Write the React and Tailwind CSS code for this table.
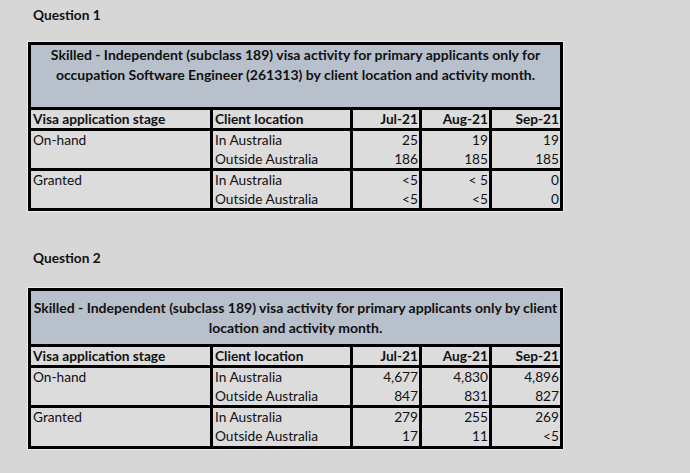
import React from "react";

const font = { fontFamily: "Lato, 'Open Sans', sans-serif" };

function Table({ titleLines, titleH, titleAlign, rows }) {
  return (
    <div className="ml-[27px] w-[537px] p-px bg-[#ececec]">
      <div className="grid grid-cols-[179px_137px_66px_67px_68px] gap-[3px] bg-black p-[3px]">
        <div
          className={`col-span-5 bg-[#b8c0cc] font-bold text-[14px] leading-[20px] text-center text-[#111] flex flex-col ${titleAlign}`}
          style={{ height: titleH }}
        >
          {titleLines.map((l, i) => (
            <div key={i} className="whitespace-nowrap">{l}</div>
          ))}
        </div>
        <div className="bg-[#dcdcdc] h-[18px] leading-[18px] font-bold pl-[2px] text-[13.7px]">Visa application stage</div>
        <div className="bg-[#dcdcdc] h-[18px] leading-[18px] font-bold pl-[2px] text-[13.7px]">Client location</div>
        <div className="bg-[#dcdcdc] h-[18px] leading-[18px] font-bold pr-[1px] text-right text-[13.7px]">Jul-21</div>
        <div className="bg-[#dcdcdc] h-[18px] leading-[18px] font-bold pr-[1px] text-right text-[13.7px]">Aug-21</div>
        <div className="bg-[#dcdcdc] h-[18px] leading-[18px] font-bold pr-[1px] text-right text-[13.7px]">Sep-21</div>
        {rows.map((r, i) => (
          <React.Fragment key={i}>
            <div className="bg-[#dcdcdc] pl-[2px] text-[13.7px]" style={{ height: r.h }}>
              <div className="leading-[17px]">{r.stage}</div>
            </div>
            <div className="bg-[#dcdcdc] pl-[2px] text-[13.7px] whitespace-nowrap" style={{ height: r.h }}>
              <div className="leading-[17px]">In Australia</div>
              <div className="leading-[21px]">Outside Australia</div>
            </div>
            {r.vals.map((v, j) => (
              <div key={j} className="bg-[#dcdcdc] pr-[1px] text-right text-[13.7px]" style={{ height: r.h }}>
                <div className="leading-[17px]">{v[0]}</div>
                <div className="leading-[21px]">{v[1]}</div>
              </div>
            ))}
          </React.Fragment>
        ))}
      </div>
    </div>
  );
}

export default function App() {
  return (
    <div className="w-[690px] h-[473px] bg-[#d7d7d7] text-[#111] overflow-hidden pt-[6px]" style={font}>
      <div className="pl-[33px] h-[18px] leading-[18px] font-bold text-[13.7px]">Question 1</div>
      <div className="mt-[17px]">
        <Table
          titleH={62}
          titleAlign="justify-start"
          titleLines={[
            "Skilled - Independent (subclass 189) visa activity for primary applicants only for",
            "occupation Software Engineer (261313) by client location and activity month.",
          ]}
          rows={[
            { stage: "On-hand", h: 37, vals: [["25", "186"], ["19", "185"], ["19", "185"]] },
            { stage: "Granted", h: 37, vals: [["<5", "<5"], ["< 5", "<5"], ["0", "0"]] },
          ]}
        />
      </div>
      <div className="mt-[37px] pl-[33px] h-[18px] leading-[18px] font-bold text-[13.7px]">Question 2</div>
      <div className="mt-[20px]">
        <Table
          titleH={53}
          titleAlign="justify-center"
          titleLines={[
            "Skilled - Independent (subclass 189) visa activity for primary applicants only by client",
            "location and activity month.",
          ]}
          rows={[
            { stage: "On-hand", h: 37, vals: [["4,677", "847"], ["4,830", "831"], ["4,896", "827"]] },
            { stage: "Granted", h: 38, vals: [["279", "17"], ["255", "11"], ["269", "<5"]] },
          ]}
        />
      </div>
    </div>
  );
}
